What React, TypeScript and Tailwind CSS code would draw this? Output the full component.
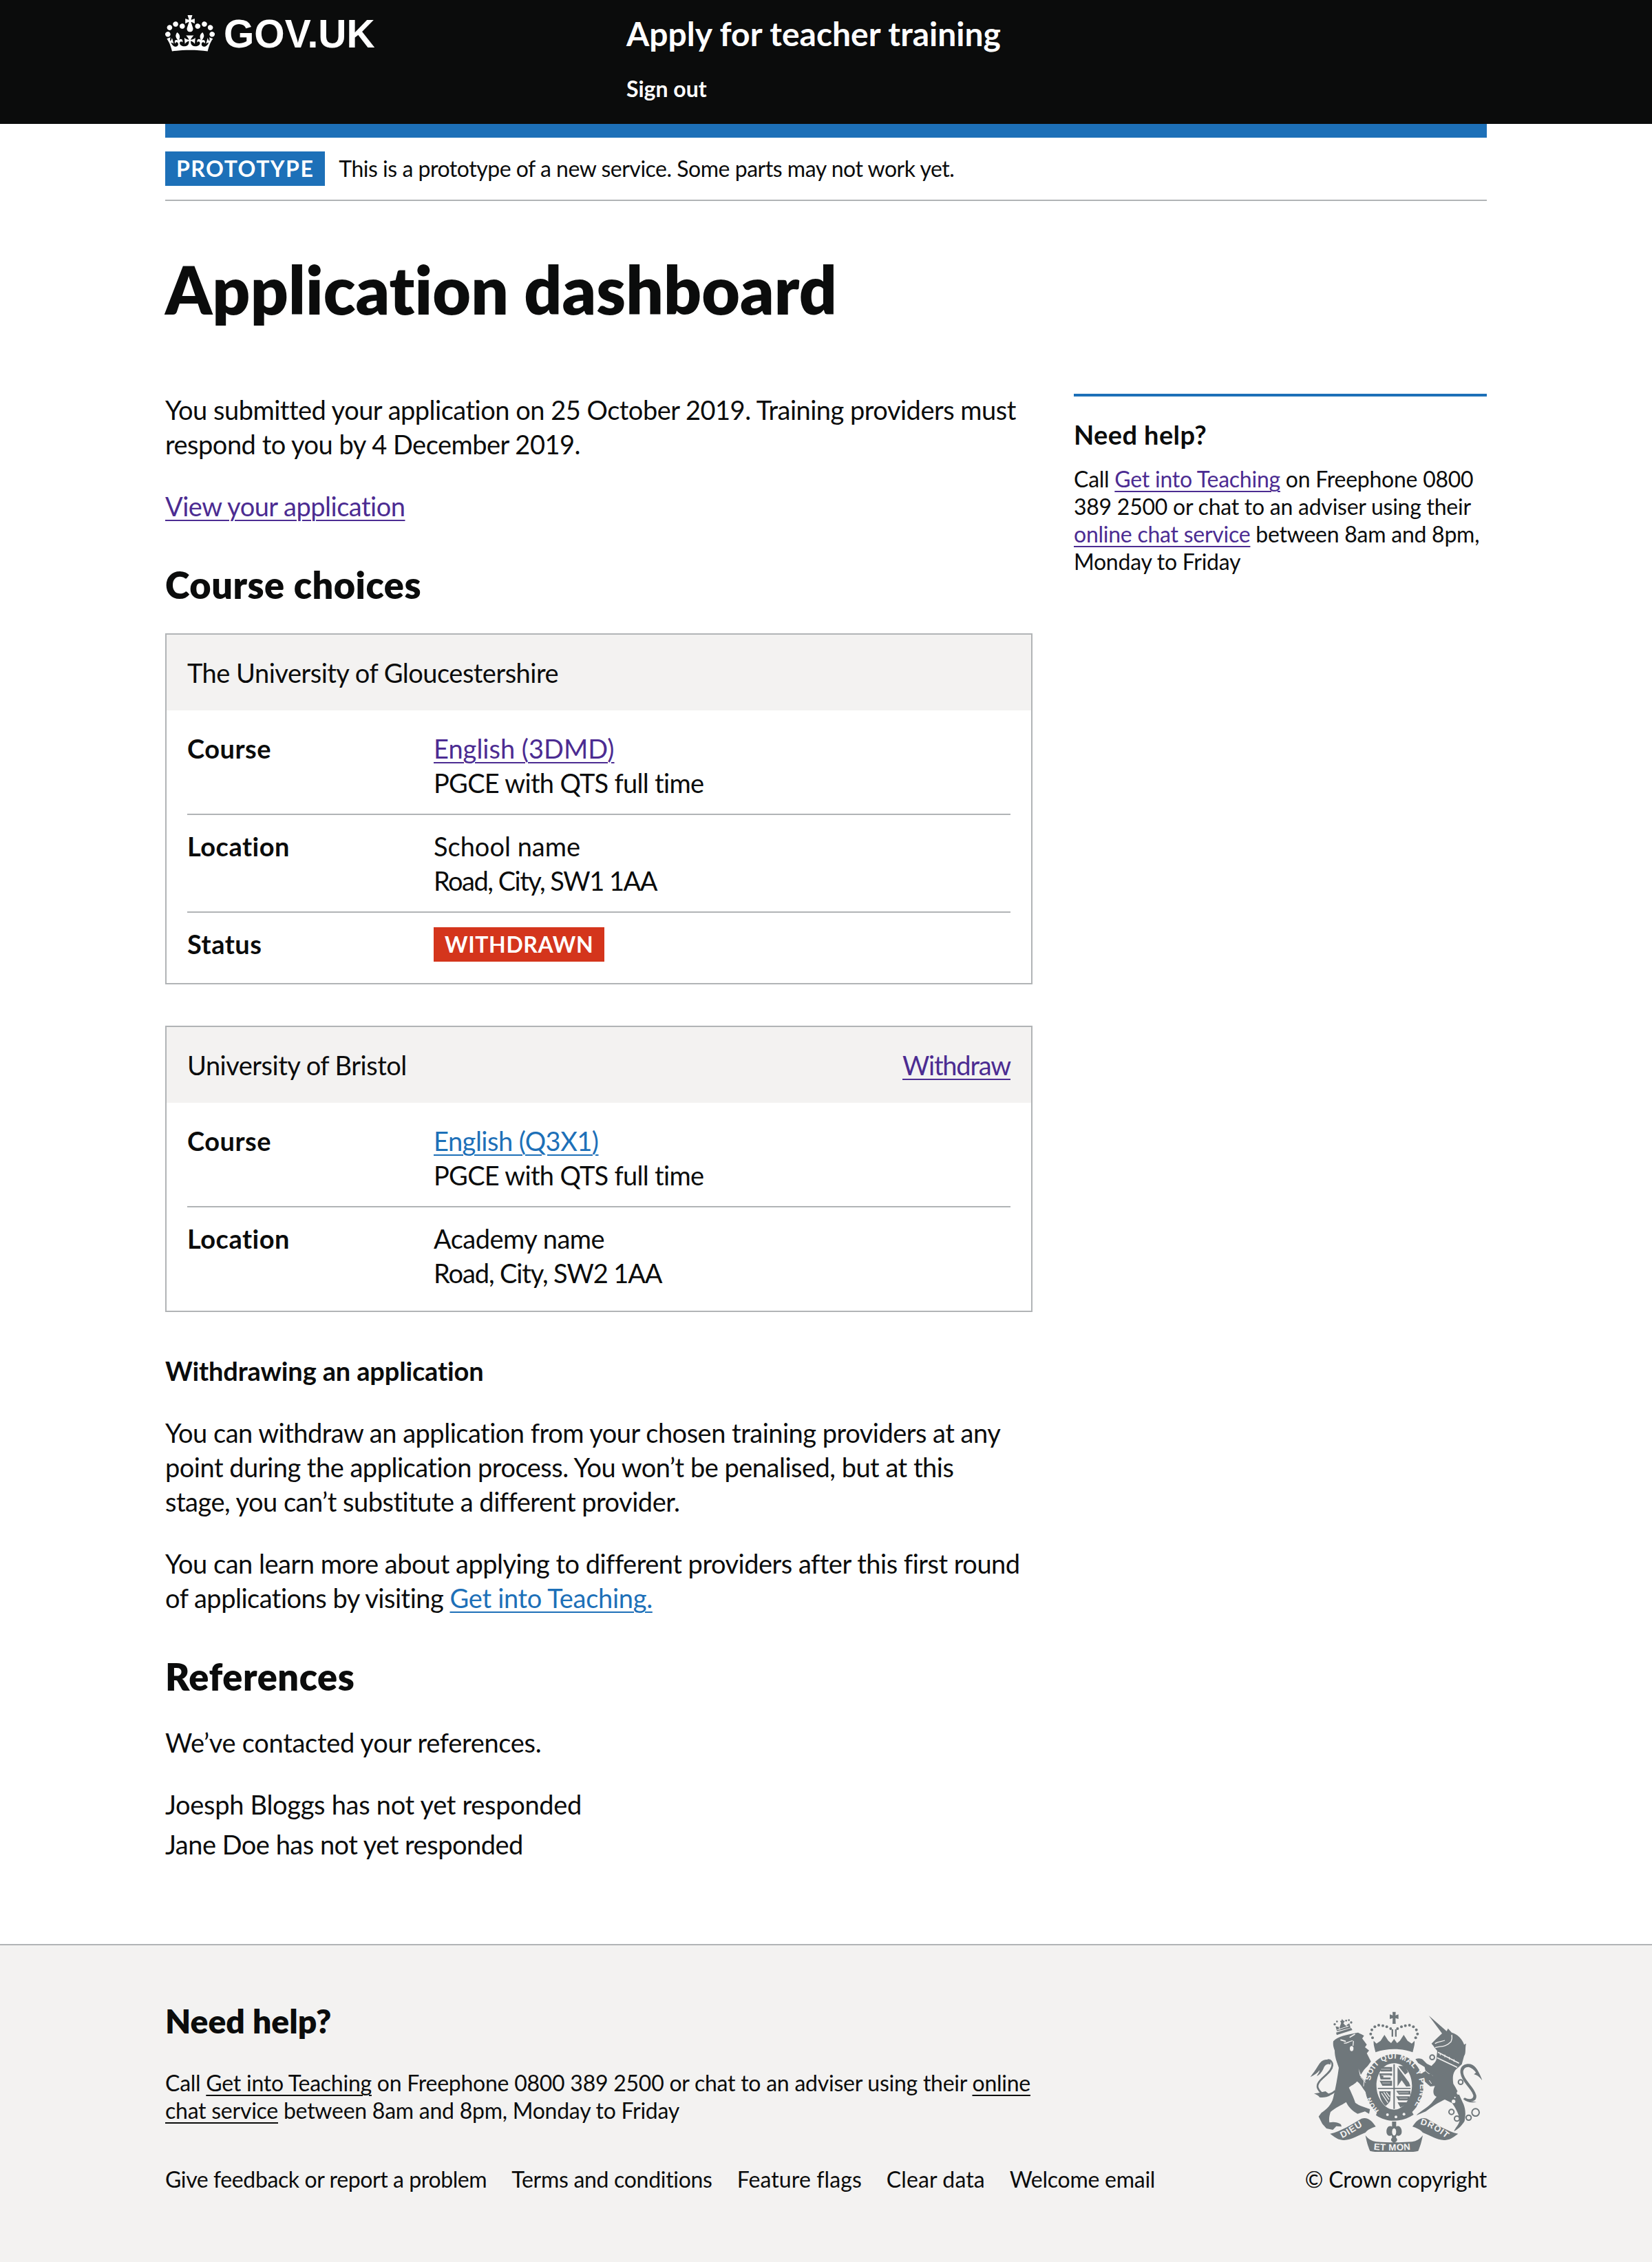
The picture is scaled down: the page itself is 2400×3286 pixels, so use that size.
const visited = "text-[#4c2c92] underline decoration-2 underline-offset-[5px]";
const blue = "text-[#1d70b8] underline decoration-2 underline-offset-[5px]";
const dark = "underline decoration-2 underline-offset-[5px]";

function Crown() {
  return (
    <svg viewBox="0 0 132 97" className="h-[53px] w-[72px] shrink-0 fill-white" aria-hidden="true">
      <path
        fillRule="evenodd"
        d="M25 30.2c3.5 1.5 7.7-.2 9.1-3.7 1.5-3.6-.2-7.8-3.9-9.2-3.6-1.4-7.6.3-9.1 3.9-1.4 3.5.3 7.5 3.9 9zM9 39.5c3.6 1.5 7.8-.2 9.2-3.7 1.5-3.6-.2-7.8-3.9-9.1-3.6-1.5-7.6.2-9.1 3.8-1.4 3.5.3 7.5 3.8 9zM4.4 57.2c3.5 1.5 7.7-.2 9.1-3.8 1.5-3.6-.2-7.7-3.9-9.1-3.5-1.5-7.6.3-9.1 3.8-1.4 3.5.3 7.6 3.9 9.1zm38.3-21.4c3.5 1.5 7.7-.2 9.1-3.8 1.5-3.6-.2-7.7-3.9-9.1-3.6-1.5-7.6.3-9.1 3.8-1.3 3.6.4 7.7 3.9 9.1zm64.4-5.6c-3.6 1.5-7.8-.2-9.1-3.7-1.5-3.6.2-7.8 3.8-9.2 3.6-1.4 7.7.3 9.2 3.9 1.3 3.5-.4 7.5-3.9 9zm15.9 9.3c-3.6 1.5-7.7-.2-9.1-3.7-1.5-3.6.2-7.8 3.7-9.1 3.6-1.5 7.7.2 9.2 3.8 1.5 3.5-.3 7.5-3.8 9zm4.7 17.7c-3.6 1.5-7.8-.2-9.2-3.8-1.5-3.6.2-7.7 3.9-9.1 3.6-1.5 7.7.3 9.2 3.8 1.3 3.5-.4 7.6-3.9 9.1zM89.3 35.8c-3.6 1.5-7.8-.2-9.2-3.8-1.4-3.6.2-7.7 3.9-9.1 3.6-1.5 7.7.3 9.2 3.8 1.4 3.6-.3 7.7-3.9 9.1zM69.7 17.7l8.9 4.7V9.3l-8.9 2.8c-.2-.3-.5-.6-.9-.9L72.4 0H59.6l3.6 11.2c-.3.3-.6.5-.9.9l-8.8-2.8v13.1l8.8-4.7c.3.3.6.7.9.9l-5 15.4v.1c-.2.8-.4 1.6-.4 2.4 0 4.1 3.1 7.5 7 8.1h.2c.3 0 .7.1 1 .1.4 0 .7 0 1-.1h.2c4-.6 7.1-4.1 7.1-8.1 0-.8-.1-1.7-.4-2.4V34l-5.1-15.4c.4-.2.7-.6 1-.9zM66 92.8c16.9 0 32.8 1.1 47.1 3.2 4-16.9 8.9-26.7 14-33.5l-9.6-3.4c1 4.9 1.1 7.2 0 10.2-1.5-1.4-3-4.3-4.2-8.7L108.6 76c2.8-2 5-3.2 7.5-3.3-4.4 9.4-10 11.9-13.6 11.2-4.3-.8-6.3-4.6-5.6-7.9 1-4.7 5.7-5.9 8-.5 4.3-8.7-3-11.4-7.6-8.8 7.1-7.2 7.9-13.5 2.1-21.1-8 6.1-8.1 12.3-4.5 20.8-4.7-5.4-12.1-2.5-9.5 6.2 3.4-5.2 7.9-2 7.2 3.1-.6 4.3-6.4 7.8-13.5 7.2-10.3-.9-10.9-8-11.2-13.8 2.5-.5 7.1 1.8 11 7.3L80.2 60c-4.1 4.4-8 5.3-12.3 5.4 1.4-4.4 8-11.6 8-11.6H55.5s6.4 7.2 7.9 11.6c-4.2-.1-8-1-12.3-5.4l1.4 16.4c3.9-5.5 8.5-7.7 10.9-7.3-.3 5.8-.9 12.8-11.1 13.8-7.2.6-12.9-2.9-13.5-7.2-.7-5 3.8-8.3 7.1-3.1 2.7-8.7-4.6-11.6-9.4-6.2 3.7-8.5 3.6-14.7-4.6-20.8-5.8 7.6-5 13.9 2.2 21.1-4.7-2.6-11.9.1-7.7 8.8 2.3-5.5 7.1-4.2 8.1.5.7 3.3-1.3 7.1-5.7 7.9-3.5.7-9-1.8-13.5-11.2 2.5.1 4.7 1.3 7.5 3.3l-4.7-15.4c-1.2 4.4-2.7 7.2-4.3 8.7-1.1-3-.9-5.3 0-10.2l-9.5 3.4c5 6.9 9.9 16.7 14 33.5 14.8-2.1 30.8-3.2 47.7-3.2z"
      />
    </svg>
  );
}

const ribbonSide =
  "M98 553 C145 543 195 510 235 487 C262 478 282 498 297 522 C280 528 262 535 252 548 C215 562 185 585 150 580 C130 578 115 565 98 553 Z";

// royal arms, traced on 3x crops of the footer (1 unit = 1/3 page px)
function Arms() {
  const ink = "#6f777b";
  const bg = "#f3f2f1";
  const beads = [
    [283, 135], [275, 118], [280, 100], [293, 87], [310, 80], [328, 82], [345, 87], [362, 95],
    [471, 135], [479, 118], [474, 100], [461, 87], [444, 80], [426, 82], [409, 87], [392, 95],
  ];
  return (
    <svg viewBox="10 20 750 612" className="h-[204px] w-[250px]" aria-hidden="true">
      <defs>
        <path id="garter-top" d="M274 322 C280 265 325 226 377 226 C440 226 485 280 490 345 C492 385 475 420 455 445" />
        <path id="garter-low" d="M312 452 C292 432 277 407 270 380" />
        <path id="ribbon-left" d="M150 572 C180 562 215 532 250 514" />
        <path id="ribbon-mid" d="M288 622 C340 628 414 628 468 620" />
        <path id="ribbon-right" d="M490 512 C528 520 570 545 606 575" />
      </defs>

      <g fill={ink}>
        {/* lion's crown */}
        <path d="M124 112 L190 92 L195 101 L127 123 Z" />
        <path d="M128 106 L122 85 L140 88 L146 70 L142 62 L148 60 L150 52 L155 60 L162 62 L156 72 L165 82 L182 72 L187 91 Z" />
        <circle cx="118" cy="76" r="5" />
        <circle cx="128" cy="64" r="4" />
        <circle cx="168" cy="60" r="4" />
        <circle cx="180" cy="58" r="4" />
        <circle cx="190" cy="68" r="5" />
        {/* lion */}
        <path d="M112 150 C130 130 165 122 220 112 C228 118 240 120 246 126 L238 138 L258 165 L250 176 L268 190 L258 202 L276 238 L262 258 C250 268 242 280 232 296 L222 270 L228 300 L270 345 L288 376 L264 386 L246 362 C238 350 226 330 215 325 C205 338 190 342 180 352 C190 372 200 395 208 418 C225 432 250 436 272 446 L268 466 L250 456 L218 466 C198 455 180 440 168 415 C150 428 118 440 100 458 C95 472 92 490 95 504 C112 500 130 502 145 512 L148 522 L125 520 L110 536 L82 530 L64 510 L48 478 L60 462 C85 445 105 425 112 395 C122 355 130 310 136 265 C128 240 118 220 118 190 C112 175 110 165 112 150 Z" />
        {/* tail tuft */}
        <path d="M100 235 C75 222 58 235 45 258 C35 275 22 292 12 306 C28 298 42 290 52 276 C52 285 45 292 40 302 C55 295 65 280 72 262 C80 248 92 248 100 252 Z" />
        {/* lower tail tuft */}
        <path d="M78 368 C60 372 44 376 28 378 C40 384 48 386 52 394 C68 396 85 394 100 385 Z" />
        {/* crown cross */}
        <path d="M370 22 H384 L383 37 L396 33 V53 L383 49 L384 74 H370 L371 49 L358 53 V33 L371 37 Z" />
        {/* crown fleurons and band */}
        <path d="M288 148 L300 160 L318 148 C325 138 330 130 335 122 C340 130 345 138 352 148 L364 158 L377 140 L390 158 L402 148 C409 138 414 130 419 122 C424 130 429 138 436 148 L454 160 L466 148 C468 165 462 178 458 198 C410 180 344 180 296 198 C292 178 286 165 288 148 Z" />
        <rect x="366" y="98" width="7" height="32" />
        <rect x="381" y="98" width="7" height="32" />
        {beads.map(([cx, cy]) => (
          <circle key={`${cx}-${cy}`} cx={cx} cy={cy} r="6" />
        ))}
        {/* garter ring */}
        <path
          fillRule="evenodd"
          d="M377 206 C445 206 505 265 505 345 C505 420 445 492 377 492 C309 492 250 420 250 345 C250 265 309 206 377 206 Z M377 246 C330 246 300 290 300 345 C300 395 335 448 377 448 C419 448 455 395 455 345 C455 290 424 246 377 246 Z"
        />
        {/* strap end under the shield */}
        <path d="M305 452 C350 470 405 470 452 452 L462 470 C410 505 345 505 298 472 Z" />
        {/* fleur-de-lis */}
        <path d="M368 500 H386 V522 C400 514 412 528 410 548 C408 560 398 566 388 560 L385 570 C392 575 392 585 385 588 L377 596 L369 588 C362 585 362 575 369 570 L366 560 C356 566 346 560 344 548 C342 528 354 514 368 522 Z" />
      </g>

      {/* shield charges */}
      <g fill={ink}>
        <rect x="374" y="250" width="6" height="195" />
        <rect x="306" y="353" width="143" height="5" />
        <path d="M312 290 H368 V300 H330 V308 H362 V316 H318 Z M308 262 H368 V282 H320 Z M314 322 H368 V344 H326 Z" />
        <path d="M392 262 L442 330 L448 346 L430 348 L410 320 L392 346 Z M395 258 L425 258 L438 285 L425 295 Z" />
        <path d="M312 368 H362 L360 410 C352 422 345 428 340 432 C325 420 314 395 312 368 Z" />
        <path d="M386 366 H448 V382 H398 Z M386 390 H444 V408 H396 Z M392 416 H432 C428 426 420 432 404 438 Z" />
      </g>
      <g fill="none" stroke={bg} strokeWidth="3">
        <path d="M322 376 L350 418 M332 372 L354 404 M343 372 L358 392" strokeWidth="4" />
        <path d="M320 272 H360 M322 298 H360 M326 332 H360 M396 374 H440 M400 398 H436" strokeWidth="2" />
      </g>

      {/* unicorn, right crop coordinates */}
      <g transform="translate(390 0)">
        <g fill={ink}>
          <path d="M138 38 L216 106 L222 94 L238 112 C262 118 285 140 292 165 L301 160 C295 180 302 200 292 214 L282 250 L262 268 C246 280 240 300 245 335 C262 360 278 400 290 425 C298 445 300 470 294 498 C285 515 265 535 248 543 C255 525 268 515 272 498 C272 475 262 452 240 420 L208 404 C190 412 165 425 125 456 L84 473 C100 456 125 445 150 420 L172 392 C155 385 155 365 165 345 L145 347 C130 335 118 322 108 315 L105 290 L124 280 L120 262 L92 245 L80 228 C92 222 105 224 112 230 L130 248 L150 258 C160 245 172 240 172 222 L175 192 L165 180 L158 170 L150 160 L170 140 L196 116 Z" />
          {/* tail */}
          <path d="M300 250 C330 244 348 258 372 322 C358 305 348 296 335 294 L344 286 C335 275 325 265 312 262 C290 262 285 280 290 295 C300 325 335 350 345 385 C348 405 335 412 322 412 L346 414 C330 420 305 418 288 402 L295 396 C310 405 335 405 332 385 C322 355 280 325 276 288 C274 268 282 254 300 250 Z" />
        </g>
        <g fill="none" stroke={bg}>
          <path d="M178 198 L270 246" strokeWidth="5" />
          <path d="M174 222 L262 264" strokeWidth="5" />
          <path d="M188 212 V202 M208 220 V208 M228 230 V218 M248 240 V228" strokeWidth="3" />
          <path d="M165 160 C180 150 195 152 208 146 M166 178 C185 170 210 178 235 152 C240 140 240 130 238 122" strokeWidth="4" />
          <path d="M125 280 C135 290 145 295 155 300 M140 320 L150 335" strokeWidth="3" />
        </g>
        <g fill={bg}>
          <circle cx="268" cy="375" r="8" />
          <circle cx="246" cy="412" r="8" />
          <circle cx="252" cy="395" r="3" />
        </g>
        <g fill="none" stroke={ink} strokeWidth="6">
          <circle cx="153" cy="220" r="10" />
          <circle cx="143" cy="305" r="10" />
          <circle cx="277" cy="328" r="10" />
          <circle cx="237" cy="458" r="11" />
          <circle cx="261" cy="487" r="11" />
          <circle cx="312" cy="483" r="11" />
          <circle cx="342" cy="460" r="16" />
        </g>
      </g>

      {/* lion's tail and face */}
      <g fill="none" stroke={ink} strokeWidth="8" strokeLinecap="round">
        <path d="M118 368 C95 390 60 388 45 355 C30 320 105 295 108 255 C108 240 100 232 90 232" />
      </g>
      <g fill="none" stroke={bg} strokeLinecap="round">
        <path d="M145 144 L165 150 M185 132 L205 120" strokeWidth="5" />
        <path d="M160 158 C172 160 180 150 195 148 M200 150 L198 168" strokeWidth="4" />
        <path d="M130 100 L178 84 M136 84 L140 98 M168 74 L172 88" strokeWidth="3" />
        <path d="M232 306 L252 330 M246 322 L244 345" strokeWidth="3" />
      </g>
      <ellipse cx="192" cy="182" rx="8" ry="11" fill={bg} />

      {/* motto ribbon */}
      <g fill={ink}>
        <path d={ribbonSide} />
        <path d={ribbonSide} transform="matrix(-1 0 0 1 754 0)" />
        <path d="M252 560 C258 590 262 605 272 628 C340 642 414 642 482 628 C492 605 496 590 502 560 C490 575 475 585 455 588 C400 592 354 592 299 588 C279 585 264 575 252 560 Z" />
      </g>
      <g fill={bg} fontFamily="'Liberation Sans', sans-serif" fontWeight="700" fontSize="34">
        <text letterSpacing="2"><textPath href="#garter-top">SOIT QUI MAL Y PENSE</textPath></text>
        <text fontSize="30" letterSpacing="2"><textPath href="#garter-low">HON</textPath></text>
        <text fontSize="40" letterSpacing="3"><textPath href="#ribbon-left">DIEU</textPath></text>
        <text fontSize="40" letterSpacing="1"><textPath href="#ribbon-mid">ET MON</textPath></text>
        <text fontSize="38" letterSpacing="3"><textPath href="#ribbon-right">DROIT</textPath></text>
        <circle cx="348" cy="470" r="6" />
        <circle cx="385" cy="480" r="6" />
        <circle cx="420" cy="468" r="6" />
      </g>
      <ellipse cx="377" cy="545" rx="9" ry="16" fill={bg} />
    </svg>
  );
}

function Row({ label, last, children }: { label: string; last?: boolean; children: React.ReactNode }) {
  return (
    <div className={last ? "flex" : "mb-5 flex border-b-2 border-[#b1b4b6] pb-5"}>
      <div className="w-[358px] shrink-0 font-bold tracking-[0.5px]">{label}</div>
      <div>{children}</div>
    </div>
  );
}

function Card({ title, action, children }: { title: string; action?: string; children: React.ReactNode }) {
  return (
    <div className="mb-[60px] border-2 border-[#b1b4b6]">
      <div className="flex justify-between bg-[#f3f2f1] p-[30px]">
        <span>{title}</span>
        {action && <a className={`${visited} tracking-[-1.2px]`}>{action}</a>}
      </div>
      <div className="p-[30px]">{children}</div>
    </div>
  );
}

export default function App() {
  return (
    <div className="font-['Lato',sans-serif] text-[38px] leading-[50px] tracking-[-0.5px] text-[#0b0c0c] [font-variant-ligatures:none]">
      <header className="h-[180px] bg-[#0b0c0c] tracking-normal text-white">
        <div className="mx-auto flex w-[1920px]">
          <a className="flex w-[670px] items-start pt-[22px]">
            <Crown />
            <span className="ml-[13px] pt-[2px] font-['Liberation_Sans',sans-serif] text-[57px] leading-[50px] font-bold">
              GOV.UK
            </span>
          </a>
          <div>
            <div className="pt-[24px] text-[48px] leading-[50px] font-bold">Apply for teacher training</div>
            <div className="mt-[35px] text-[32px] leading-[40px] font-bold">Sign out</div>
          </div>
        </div>
      </header>

      <div className="mx-auto w-[1920px]">
        <div className="flex items-start gap-5 border-t-[20px] border-b-2 border-t-[#1d70b8] border-b-[#b1b4b6] py-5">
          <strong className="h-[50px] bg-[#1d70b8] px-4 text-[32px] font-bold tracking-[1.5px] text-white">PROTOTYPE</strong>
          <span className="text-[32px] tracking-[-0.48px]">This is a prototype of a new service. Some parts may not work yet.</span>
        </div>

        <h1 className="mt-[78px] mb-[100px] text-[96px] leading-[100px] font-extrabold tracking-[0.1px]">Application dashboard</h1>

        <div className="flex gap-[60px]">
          <main className="w-[1260px]">
            <p className="mb-10">
              You submitted your application on 25 October 2019. Training providers must respond to you by 4 December 2019.
            </p>
            <p className="mb-[60px]">
              <a className={visited}>View your application</a>
            </p>

            <h2 className="mb-10 text-[54px] leading-[60px] font-extrabold tracking-[0.5px]">Course choices</h2>
            <Card title="The University of Gloucestershire">
              <Row label="Course">
                <a className={`${visited} tracking-normal`}>English (3DMD)</a>
                <br />
                <span className="tracking-[-0.7px]">PGCE with QTS full time</span>
              </Row>
              <Row label="Location">
                <span className="tracking-normal">School name</span>
                <br />
                <span className="tracking-[-1.5px]">Road, City, SW1 1AA</span>
              </Row>
              <Row label="Status" last>
                <strong className="my-px block h-[50px] bg-[#d4351c] px-4 text-[32px] font-bold tracking-[0.6px] text-white">
                  WITHDRAWN
                </strong>
              </Row>
            </Card>

            <Card title="University of Bristol" action="Withdraw">
              <Row label="Course">
                <a className={blue}>English (Q3X1)</a>
                <br />
                <span className="tracking-[-0.7px]">PGCE with QTS full time</span>
              </Row>
              <Row label="Location" last>
                Academy name
                <br />
                <span className="tracking-[-1.1px]">Road, City, SW2 1AA</span>
              </Row>
            </Card>

            <h3 className="mb-10 font-bold tracking-[-0.15px]">Withdrawing an application</h3>
            <p className="mb-10">
              You can withdraw an application from your chosen training providers at any point during the application
              process. You won’t be penalised, but at this
              <br />
              stage, you can’t substitute a different provider.
            </p>
            <p className="mb-[60px]">
              You can learn more about applying to different providers after this first round of applications by visiting{" "}
              <a className={`${blue} tracking-[-0.3px]`}>Get into Teaching.</a>
            </p>

            <h2 className="mb-10 text-[54px] leading-[60px] font-extrabold tracking-[0.6px]">References</h2>
            <p className="mb-10 tracking-[-0.3px]">We’ve contacted your references.</p>
            <ul>
              <li className="mb-2 tracking-[-0.3px]">Joesph Bloggs has not yet responded</li>
              <li>Jane Doe has not yet responded</li>
            </ul>
          </main>

          <aside className="mt-[2px] w-[600px] text-[32px] leading-[40px] tracking-[-0.25px]">
            <div className="border-t-4 border-[#1d70b8] pt-[30px]">
              <h2 className="mb-[20px] text-[38px] leading-[50px] font-bold tracking-[0.4px]">Need help?</h2>
              <p>
                Call <a className={visited}>Get into Teaching</a> on Freephone 0800 389 2500 or chat to an adviser using
                their <a className={visited}>online chat service</a> between 8am and 8pm, Monday to Friday
              </p>
            </div>
          </aside>
        </div>
      </div>

      <footer className="mt-[120px] border-t-2 border-[#b1b4b6] bg-[#f3f2f1] pt-[80px] pb-[100px] text-[32px] leading-[40px] tracking-[-0.25px]">
        <div className="mx-auto flex w-[1920px] items-end justify-between">
          <div>
            <h2 className="mb-10 text-[48px] leading-[60px] font-extrabold tracking-normal">Need help?</h2>
            <p className="mb-[60px] w-[1260px]">
              Call <a className={dark}>Get into Teaching</a> on Freephone 0800 389 2500 or chat to an adviser using their{" "}
              <a className={dark}>online chat service</a> between 8am and 8pm, Monday to Friday
            </p>
            <div className="flex gap-[36px]">
              <a className="tracking-[-0.4px]">Give feedback or report a problem</a>
              <a className="tracking-[-0.3px]">Terms and conditions</a>
              <a className="tracking-[0.1px]">Feature flags</a>
              <a className="tracking-[0.1px]">Clear data</a>
              <a>Welcome email</a>
            </div>
          </div>
          <div className="flex flex-col items-end">
            <div className="mr-[7px] h-[204px]">
              <Arms />
            </div>
            <div className="mt-5">© Crown copyright</div>
          </div>
        </div>
      </footer>
    </div>
  );
}
